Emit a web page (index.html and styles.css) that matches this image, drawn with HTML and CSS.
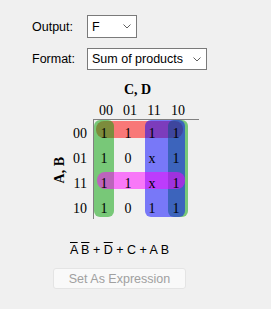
FILE: index.html
```html
<!DOCTYPE html>
<html lang="en">
<head>
    <meta charset="UTF-8">
    <title>Karnaugh Map</title>
    <link rel="stylesheet" href="styles.css">
</head>
<body>
    <div class="panel">
        <div class="form">
            <label>Output:</label>
            <div class="combo combo-output">
                <span>F</span>
                <svg width="8" height="5" viewBox="0 0 8 5"><path d="M0.5 0.5 L4 4 L7.5 0.5" fill="none" stroke="#606060"/></svg>
            </div>
            <label>Format:</label>
            <div class="combo combo-format">
                <span>Sum of products</span>
                <svg width="8" height="5" viewBox="0 0 8 5"><path d="M0.5 0.5 L4 4 L7.5 0.5" fill="none" stroke="#606060"/></svg>
            </div>
        </div>

        <div class="kmap">
            <div class="kmap-title">C, D</div>
            <div class="col-heads">
                <span>00</span><span>01</span><span>11</span><span>10</span>
            </div>
            <div class="ab-label">A, B</div>
            <div class="row-heads">
                <span>00</span><span>01</span><span>11</span><span>10</span>
            </div>
            <div class="cells">
                <div class="group red"></div>
                <div class="group green-left"></div>
                <div class="group green-right"></div>
                <div class="group blue"></div>
                <div class="group magenta"></div>

                <span>1</span><span>1</span><span>1</span><span>1</span>
                <span>1</span><span>0</span><span>x</span><span>1</span>
                <span>1</span><span>1</span><span>x</span><span>1</span>
                <span>1</span><span>0</span><span>1</span><span>1</span>
            </div>
        </div>

        <div class="footer">
            <div class="expr"><span class="bar">A</span> <span class="bar">B</span> + <span class="bar">D</span> + C + A B</div>
            <button class="set-btn" disabled>Set As Expression</button>
        </div>
    </div>
</body>
</html>
```

FILE: styles.css
```css
* {
    box-sizing: border-box;
}

body {
    margin: 0;
    background: #f0f0f0;
    font-family: "Liberation Sans", Arial, sans-serif;
    font-size: 12.5px;
    color: #000;
}

.panel {
    padding: 15px 0 0 32px;
}

/* output / format pickers */
.form {
    display: grid;
    grid-template-columns: 55px auto;
    row-gap: 10px;
    align-items: center;
    justify-items: start;
}

.combo {
    display: flex;
    align-items: center;
    justify-content: space-between;
    background: #fff;
    border: 1px solid #7a7a7a;
    padding: 0 5px 0 4px;
}

.combo-output {
    width: 50px;
    height: 23px;
}

.combo-format {
    width: 120px;
    height: 22px;
}

/* karnaugh map */
.kmap {
    display: grid;
    grid-template-columns: 20px 23px 106px;
    margin: 12px 0 0 18px;
    font-family: "Liberation Serif", "Times New Roman", serif;
    font-size: 14px;
}

.kmap-title {
    grid-column: 3;
    padding-left: 31px;
    line-height: 16px;
    margin-bottom: 5px;
    font-weight: bold;
    font-size: 14px;
}

.col-heads {
    grid-column: 3;
    display: grid;
    grid-template-columns: repeat(4, 24px);
    padding-left: 1px;
    line-height: 16px;
    text-align: center;
}

.ab-label {
    grid-column: 1;
    align-self: center;
    justify-self: center;
    writing-mode: vertical-rl;
    transform: rotate(180deg);
    font-weight: bold;
    font-size: 14px;
    line-height: 16px;
}

.row-heads {
    grid-column: 2;
    display: grid;
    grid-template-rows: repeat(4, 25px);
    align-content: start;
    padding: 2px 6px 0 0;
    line-height: 25px;
    text-align: right;
}

.cells {
    grid-column: 3;
    position: relative;
    height: 100px;
    display: grid;
    grid-template-columns: repeat(4, 24px);
    grid-template-rows: repeat(4, 25px);
    padding-top: 1px;
    border-top: 1px solid #808080;
    border-left: 1px solid #808080;
}

.cells span {
    position: relative;
    z-index: 1;
    padding-right: 4px;
    line-height: 25px;
    text-align: center;
}

.group {
    position: absolute;
}

.red {
    left: 2px;
    top: 1px;
    width: 87px;
    height: 17px;
    border-radius: 8px;
    background: rgba(255, 0, 0, 0.5);
}

.green-left,
.green-right {
    top: 0;
    width: 20px;
    height: 97px;
    border-radius: 6px;
    background: rgba(0, 160, 0, 0.5);
}

.green-left {
    left: 0;
}

.green-right {
    left: 74px;
}

.blue {
    left: 51px;
    top: 0;
    width: 40px;
    height: 97px;
    border-radius: 6px;
    background: rgba(0, 0, 255, 0.5);
}

.magenta {
    left: 3px;
    top: 52px;
    width: 88px;
    height: 17px;
    border-radius: 8px;
    background: rgba(255, 0, 255, 0.5);
}

/* expression + button */
.footer {
    width: 133px;
    margin: 21px 0 0 21px;
    text-align: center;
}

.expr {
    line-height: 16px;
}

.bar {
    text-decoration: overline;
}

.set-btn {
    display: block;
    width: 133px;
    height: 21px;
    margin-top: 10px;
    padding: 0;
    background: #f9f9f9;
    border: 1px solid #e4e4e4;
    border-radius: 3px;
    color: #a0a0a0;
    font-family: inherit;
    font-size: 12.5px;
}
```
